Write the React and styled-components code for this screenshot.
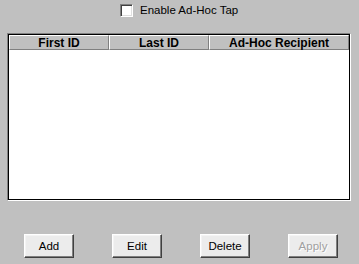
import React from "react";
import styled, { createGlobalStyle } from "styled-components";

const Global = createGlobalStyle`
  html, body { margin: 0; padding: 0; background: #c0c0c0; }
  body { font-family: "Liberation Sans", Arial, sans-serif; font-size: 11px; color: #000; }
`;

const Page = styled.div`
  width: 359px;
  height: 264px;
  background: #c0c0c0;
  display: flex;
  flex-direction: column;
  box-sizing: border-box;
`;

const TopRow = styled.label`
  display: flex;
  align-items: center;
  gap: 7px;
  padding: 3px 0 0 120px;
  height: 14px;
  font-size: 11.5px;
`;

const Check = styled.span`
  width: 9px;
  height: 9px;
  background: #fff;
  border-top: 1px solid #808080;
  border-left: 1px solid #808080;
  border-right: 1px solid #fff;
  border-bottom: 1px solid #fff;
  box-shadow: inset 1px 1px 0 #404040, inset -1px -1px 0 #dfdfdf;
  padding: 1px;
  box-sizing: content-box;
`;

const ListBox = styled.div`
  margin: 16px 0 0 7px;
  width: 344px;
  height: 168px;
  box-sizing: border-box;
  border-top: 1px solid #808080;
  border-left: 1px solid #808080;
  border-right: 1px solid #fff;
  border-bottom: 1px solid #fff;
  display: flex;
`;

const ListInner = styled.div`
  flex: 1;
  border: 1px solid #000;
  background: #fff;
  display: flex;
  flex-direction: column;
`;

const Header = styled.div`
  display: grid;
  grid-template-columns: 100px 100px 140px;
  height: 15px;
  background: #c0c0c0;
`;

const HeadCell = styled.div`
  box-sizing: border-box;
  border-top: 1px solid #fff;
  border-left: 1px solid #fff;
  border-right: 1px solid #808080;
  border-bottom: 1px solid #808080;
  display: flex;
  align-items: center;
  justify-content: center;
  font-weight: bold;
  font-size: 12px;
  line-height: 12px;
  padding-top: 0px;
`;

const Buttons = styled.div`
  display: flex;
  gap: 38px;
  padding: 33px 0 0 24px;
`;

const Button = styled.button`
  width: 50px;
  height: 24px;
  box-sizing: border-box;
  padding: 0;
  font-family: "Liberation Sans", Arial, sans-serif;
  font-size: 11.5px;
  background: #ececec;
  color: ${(p) => (p.disabled ? "#a0a0a0" : "#000")};
  text-shadow: ${(p) => (p.disabled ? "1px 1px 0 #fff" : "none")};
  border-top: 1px solid #fff;
  border-left: 1px solid #fff;
  border-right: 1px solid #404040;
  border-bottom: 1px solid #404040;
  box-shadow: inset -1px -1px 0 #808080, inset 1px 1px 0 #f4f4f4;
  cursor: default;
`;

export default function App() {
  return (
    <Page>
      <Global />
      <TopRow>
        <Check />
        <span>Enable Ad-Hoc Tap</span>
      </TopRow>
      <ListBox>
        <ListInner>
          <Header>
            <HeadCell>First ID</HeadCell>
            <HeadCell>Last ID</HeadCell>
            <HeadCell>Ad-Hoc Recipient</HeadCell>
          </Header>
        </ListInner>
      </ListBox>
      <Buttons>
        <Button>Add</Button>
        <Button>Edit</Button>
        <Button>Delete</Button>
        <Button disabled>Apply</Button>
      </Buttons>
    </Page>
  );
}
